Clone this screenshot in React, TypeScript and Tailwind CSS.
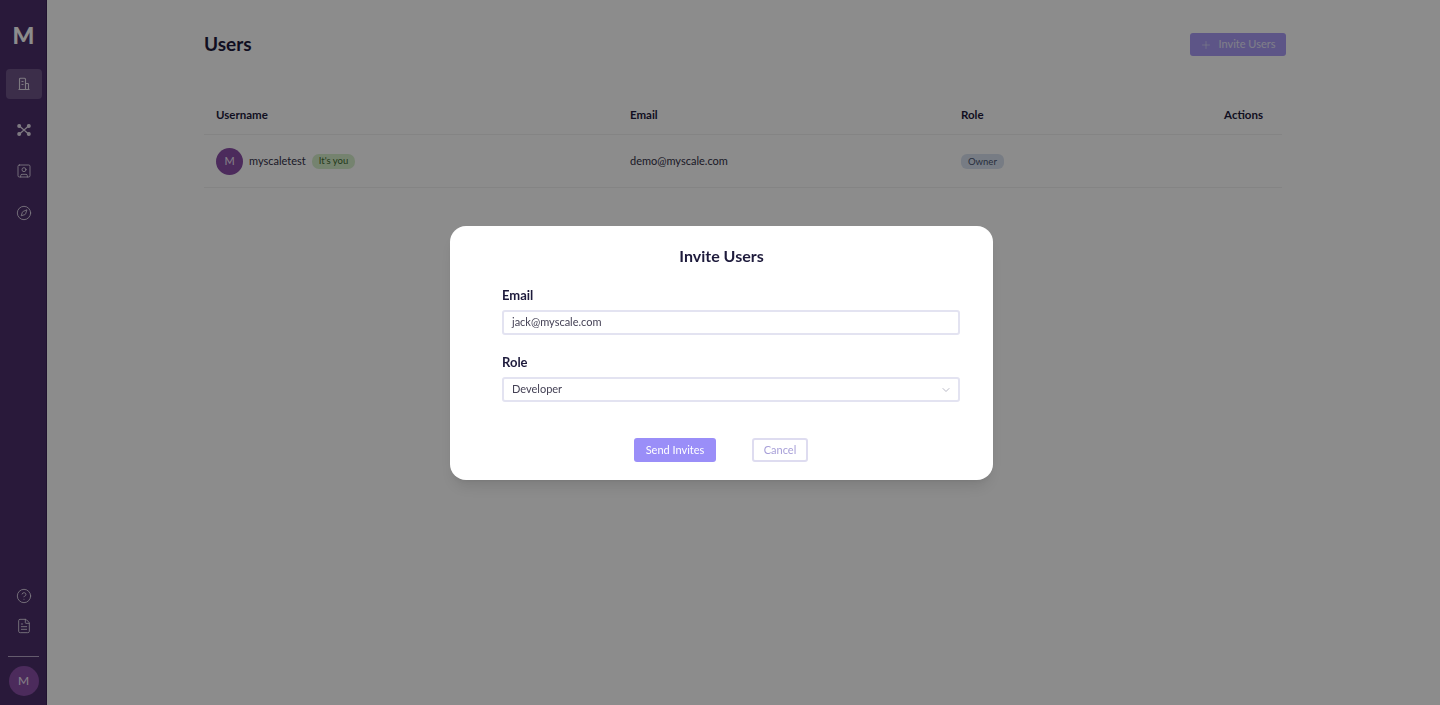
import { ChevronDown, CircleHelp, Compass, FileText, Plus, SquareUser } from "lucide-react";

function BuildingIcon() {
  return (
    <svg className="w-[14px] h-[14px]" viewBox="0 0 14 14" fill="none" stroke="currentColor" strokeWidth={1.1}>
      <path d="M2.5 12.5V2.2c0-.6.4-1 1-1h4c.6 0 1 .4 1 1v10.3" />
      <path d="M8.5 6.5h2.2c.5 0 .8.3.8.8v5.2" />
      <path d="M1.5 12.5h11M4.5 4.5h2M4.5 7.5h2" />
    </svg>
  );
}

function NodesIcon() {
  return (
    <svg className="w-[14px] h-[14px]" viewBox="0 0 14 14" fill="none" stroke="currentColor" strokeWidth={1.2}>
      <path d="M3 3.5l8 7M11 3.5l-8 7" />
      <circle cx="2.2" cy="3" r="1.4" fill="currentColor" />
      <circle cx="11.8" cy="3" r="1.4" fill="currentColor" />
      <circle cx="2.2" cy="11" r="1.4" fill="currentColor" />
      <circle cx="11.8" cy="11" r="1.4" fill="currentColor" />
    </svg>
  );
}

function Sidebar() {
  return (
    <aside className="w-[47px] h-[705px] shrink-0 bg-[#4c2f6b] shadow-[inset_-1px_0_0_#3c2258] flex flex-col items-center text-[#e4dcea]">
      <div className="mt-[20px] h-[30px] text-[23px] leading-[30px] font-black text-white">M</div>
      <div className="mt-[19px] w-[36px] h-[30px] rounded bg-[#6e5488] flex items-center justify-center">
        <BuildingIcon />
      </div>
      <div className="mt-[24px] flex flex-col items-center gap-[26px]">
        <NodesIcon />
        <SquareUser size={16} strokeWidth={1.3} />
        <Compass size={16} strokeWidth={1.3} />
      </div>
      <div className="mt-auto flex flex-col items-center gap-[14px]">
        <CircleHelp size={16} strokeWidth={1.3} />
        <FileText size={16} strokeWidth={1.3} />
      </div>
      <div className="mt-[22px] w-[31px] border-t border-[#b7a6c6]" />
      <div className="mt-[9px] mb-[9px] w-[30px] h-[30px] rounded-full bg-[#8b4fa8] flex items-center justify-center text-[12px] text-[#f2e8f6]">
        M
      </div>
    </aside>
  );
}

function UsersPage() {
  return (
    <main className="flex-1 pl-[157px] pt-[33px]">
      <div className="w-[1082px]">
        <div className="flex items-center justify-between h-[23px]">
          <h1 className="text-[19px] font-bold text-[#1e1b3c] -mt-[1px]">Users</h1>
          <button className="w-[96px] h-[23px] rounded-[3px] bg-[#a99cf6] text-[#e8e6f8] text-[11px] flex items-center justify-center gap-[6px]">
            <Plus size={12} strokeWidth={1.2} />
            Invite Users
          </button>
        </div>
        <div className="mt-[36px] w-[1078px] text-[11px] text-[#333047]">
          <div className="h-[43px] pt-[4px] grid grid-cols-[414px_331px_1fr] items-center pl-[12px] pr-[19px] text-[11.5px] font-bold text-[#1e1b3c] border-b border-[#f0f0f0]">
            <span>Username</span>
            <span>Email</span>
            <div className="flex justify-between">
              <span>Role</span>
              <span>Actions</span>
            </div>
          </div>
          <div className="h-[53px] grid grid-cols-[414px_331px_1fr] items-center pl-[12px] pr-[19px] border-b border-[#f0f0f0]">
            <div className="flex items-center">
              <div className="w-[27px] h-[27px] rounded-full bg-[#8b4fa8] text-[#f2e8f6] flex items-center justify-center">M</div>
              <span className="ml-[6px]">myscaletest</span>
              <span className="ml-[6px] h-[15px] px-[7px] rounded-[7px] bg-[#d6eecb] text-[#3e6b2f] text-[9.5px] flex items-center">It's you</span>
            </div>
            <span>demo@myscale.com</span>
            <div>
              <span className="inline-flex items-center h-[15px] px-[7px] rounded-[6px] bg-[#d9e2f0] text-[#4a5570] text-[9.5px]">Owner</span>
            </div>
          </div>
        </div>
      </div>
    </main>
  );
}

function InviteModal() {
  return (
    <div className="fixed inset-0 bg-black/45 flex items-center justify-center">
      <div className="w-[543px] h-[254px] ml-[3px] rounded-2xl bg-white pl-[52px] pr-[33px] pt-[19px] shadow-lg">
        <h2 className="h-[22px] -ml-[19px] text-center text-[16px] leading-[22px] font-bold text-[#1e1b3c]">Invite Users</h2>
        <label className="block mt-[19px] text-[13px] leading-[18px] font-bold text-[#1e1b3c]">Email</label>
        <div className="mt-[6px] h-[25px] pt-[1px] rounded-[3px] border-2 border-[#e3e3f1] flex items-center pl-[8px] text-[11px] text-[#444155]">
          jack@myscale.com
        </div>
        <label className="block mt-[18px] text-[13px] leading-[18px] font-bold text-[#1e1b3c]">Role</label>
        <div className="mt-[6px] h-[25px] pt-[1px] rounded-[3px] border-2 border-[#e3e3f1] flex items-center justify-between pl-[8px] pr-[6px] text-[11px] text-[#444155]">
          Developer
          <ChevronDown size={12} className="text-[#b9b9c6]" />
        </div>
        <div className="mt-[36px] flex pl-[132px] gap-[36px]">
          <button className="w-[82px] h-[24px] pt-[1px] rounded-[3px] bg-[#9a8ef8] text-white text-[11px]">Send Invites</button>
          <button className="w-[56px] h-[24px] pt-[1px] rounded-[3px] border-2 border-[#dedcf0] text-[#a79fd8] text-[11px]">Cancel</button>
        </div>
      </div>
    </div>
  );
}

export default function App() {
  return (
    <div className="relative flex h-[705px] bg-white overflow-hidden font-['Lato',sans-serif]">
      <Sidebar />
      <UsersPage />
      <InviteModal />
    </div>
  );
}
